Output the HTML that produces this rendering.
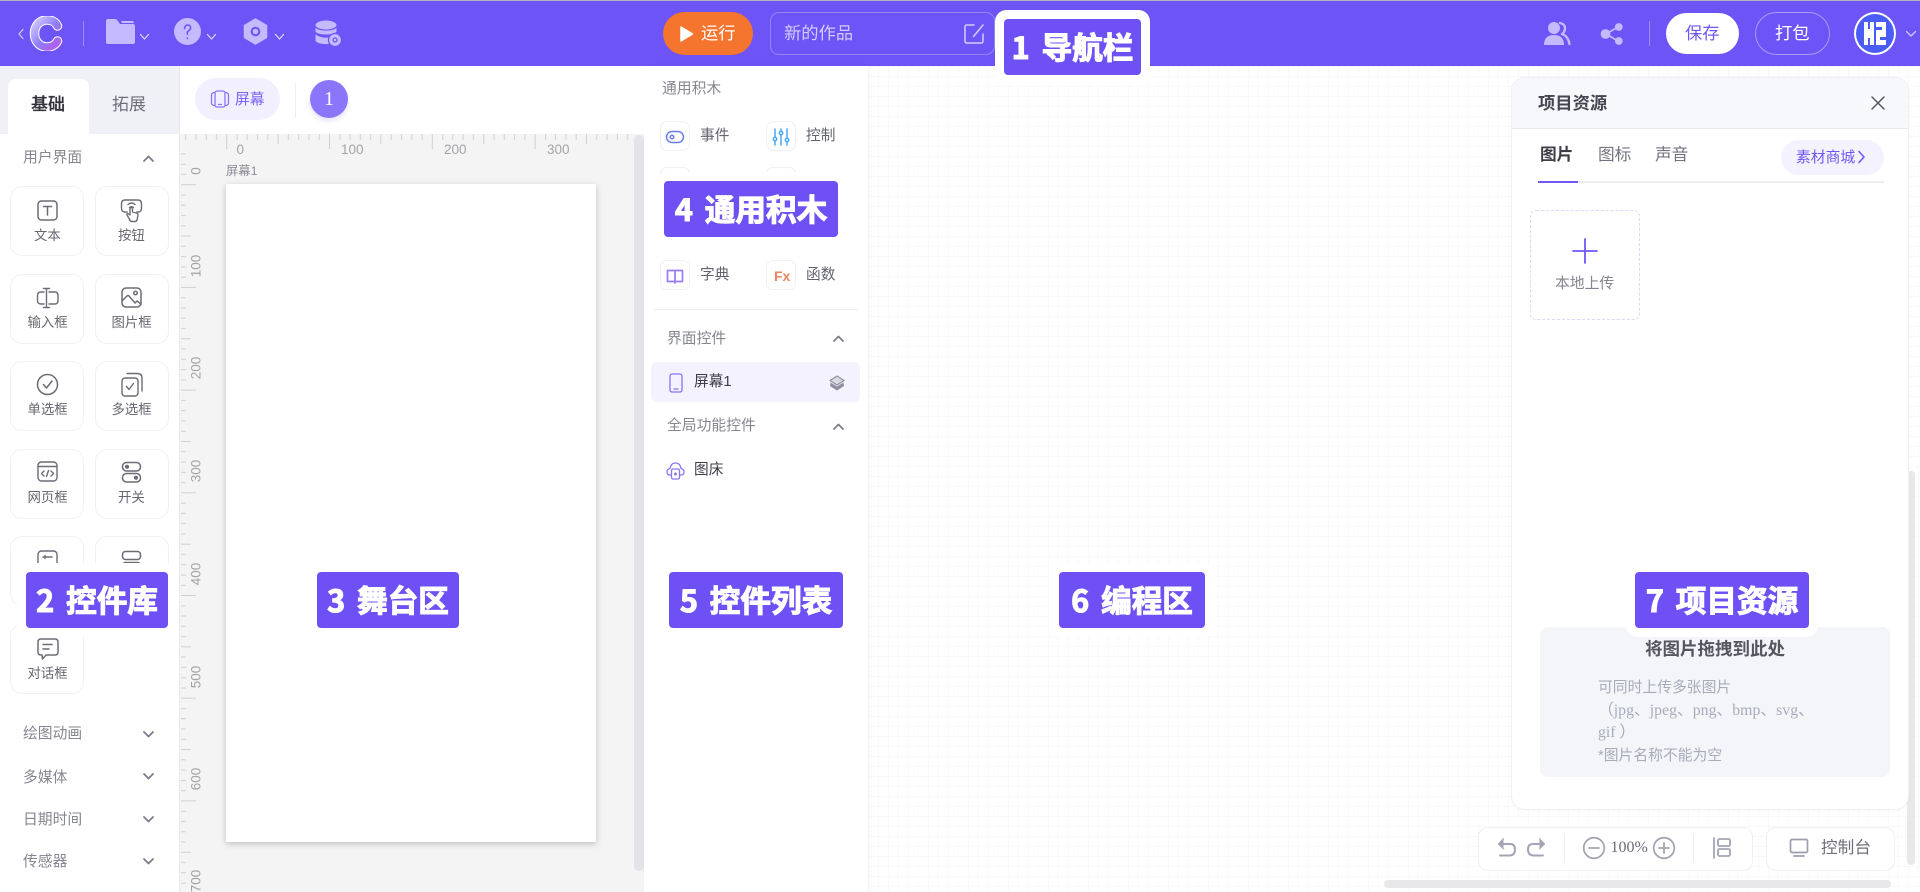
<!DOCTYPE html>
<html lang="zh-CN"><head><meta charset="utf-8"><title>新的作品</title>
<style>
*{box-sizing:border-box;margin:0;padding:0}
html,body{width:1920px;height:892px;overflow:hidden;background:#fff;font-family:"Liberation Sans","Noto Sans CJK SC",sans-serif}
#w{position:absolute;left:0;top:0;width:1920px;height:892px;overflow:hidden;background:#fff;filter:blur(.3px)}
.a,.t,.card,.lb,svg.i{position:absolute}
.t{white-space:nowrap;line-height:1}
.card{width:74px;height:70px;border:1px solid #f1f1f4;border-radius:12px;background:#fff}
.cl{color:#66676f;font-size:13.4px}
.g{color:#85868f;font-size:14.8px}
.lb{height:56px;background:#6f50f5;border-radius:4px;box-shadow:0 0 0 9px #fff;color:#fff;font-weight:700;font-size:30.600px;line-height:54px;text-align:center;white-space:nowrap;word-spacing:5px;z-index:10;-webkit-text-stroke:1.100px #fff;font-family:"Noto Sans CJK SC","Liberation Sans",sans-serif}
.bx{position:absolute;width:30px;height:30px;border:1px solid #f0f0f5;border-radius:7px;background:#fff}
svg.i{fill:none;stroke-linecap:round;stroke-linejoin:round}
.r{position:absolute;color:#a4a4a8;font-size:13.5px;line-height:1;white-space:nowrap}
.rv{position:absolute;color:#a4a4a8;font-size:13.5px;line-height:1;white-space:nowrap;transform:translate(-50%,-50%) rotate(-90deg)}
</style></head><body><div id="w">

<!-- top bar -->
<div class="a" style="left:0;top:0;width:1920px;height:66px;background:#6c54f6"></div>
<div class="a" style="left:0;top:0;width:1920px;height:1px;background:#b5b3bd"></div>
<svg class="i" style="left:16px;top:26px" width="10" height="16" viewBox="0 0 10 16" stroke="#cfc7ff" stroke-width="1.300"><path d="M7 3.500L3 8l4 4.500"/></svg>
<svg class="i" style="left:29px;top:16px" width="34" height="35" viewBox="0 0 34 35">
<defs><linearGradient id="lg" x1="0" y1="0" x2="1" y2="1"><stop offset="0" stop-color="#cfc8ff"/><stop offset=".55" stop-color="#8f7bf8"/><stop offset="1" stop-color="#b35cf0"/></linearGradient></defs>
<path d="M28.500 10C26 5 22 4 18 4 10 4 5.500 10.500 5.500 17.500S10 31 18 31c4.500 0 8.500-2 10.500-6" stroke="#fff" stroke-width="9.500"/>
<path d="M28.500 10C26 5 22 4 18 4 10 4 5.500 10.500 5.500 17.500S10 31 18 31c4.500 0 8.500-2 10.500-6" stroke="url(#lg)" stroke-width="7.500"/></svg>
<div class="a" style="left:83px;top:21px;width:1px;height:25px;background:#9c8bf9"></div>
<svg class="i" style="left:106px;top:18px" width="29" height="27" viewBox="0 0 29 27"><path d="M0 3Q0 1 2 1h7q1.500 0 2.500 1.500L14 6h13q2 0 2 2v16q0 2-2 2H2q-2 0-2-2z" fill="#c5b9ff"/><path d="M15 3h11q2 0 2 2H16z" fill="#c5b9ff"/></svg>
<svg class="i" style="left:139px;top:33px" width="11" height="8" viewBox="0 0 11 8" stroke="#d9d2ff" stroke-width="1.300"><path d="M1.500 1.500L5.500 6l4-4.500"/></svg>
<svg class="i" style="left:174px;top:18px" width="27" height="27" viewBox="0 0 27 27"><circle cx="13.500" cy="13.500" r="13.500" fill="#c5b9ff"/><path d="M10.500 10.500q.5-3.500 3.200-3.500t3 2.800q0 1.700-2 3t-1.300 3.500M13.400 20v.5" stroke="#6c54f6" stroke-width="1.500"/></svg>
<svg class="i" style="left:206px;top:33px" width="11" height="8" viewBox="0 0 11 8" stroke="#d9d2ff" stroke-width="1.300"><path d="M1.500 1.500L5.500 6l4-4.500"/></svg>
<svg class="i" style="left:243px;top:18px" width="25" height="27" viewBox="0 0 25 27"><path d="M12.500 1L23.500 7.500v12L12.500 26 1.500 19.500v-12z" fill="#c5b9ff" stroke="#c5b9ff" stroke-width="1.500"/><circle cx="12.500" cy="13.500" r="3.800" stroke="#6c54f6" stroke-width="2"/></svg>
<svg class="i" style="left:274px;top:33px" width="11" height="8" viewBox="0 0 11 8" stroke="#d9d2ff" stroke-width="1.300"><path d="M1.500 1.500L5.500 6l4-4.500"/></svg>
<svg class="i" style="left:315px;top:20px" width="27" height="27" viewBox="0 0 27 27"><ellipse cx="11" cy="5" rx="10.500" ry="4.500" fill="#c5b9ff"/><path d="M.5 7.500c2 4 19 4 21 0v4c-2 4-19 4-21 0z" fill="#c5b9ff"/><path d="M.5 14c2 3.500 13 4.500 15 3l-2 7c-5 .5-11-.5-13-3z" fill="#c5b9ff"/><circle cx="20" cy="20" r="6.500" fill="#c5b9ff" stroke="#6c54f6" stroke-width="1.200"/><circle cx="20" cy="20" r="2" stroke="#6c54f6" stroke-width="1.200"/></svg>

<div class="a" style="left:663px;top:12px;width:90px;height:43px;border-radius:22px;background:#f5742e"></div>
<svg class="i" style="left:680px;top:25px" width="14" height="18" viewBox="0 0 14 18"><path d="M1 2l11.500 7L1 16z" fill="#fff" stroke="#fff" stroke-width="1.500"/></svg>
<div class="t" style="left:701px;top:25px;font-size:17.300px;color:#fff">运行</div>
<div class="a" style="left:770px;top:12px;width:225px;height:43px;border:1px solid #9385f8;border-radius:9px"></div>
<div class="t" style="left:784px;top:25px;font-size:17.300px;color:#d3cbff">新的作品</div>
<svg class="i" style="left:963px;top:23px" width="23" height="22" viewBox="0 0 23 22" stroke="#d5cdff" stroke-width="1.500"><path d="M11 2H4Q2 2 2 4v14q0 2 2 2h14q2 0 2-2v-7M20 2L10.500 13.500"/></svg>

<svg class="i" style="left:1544px;top:21px" width="27" height="25" viewBox="0 0 27 25"><circle cx="10" cy="7" r="6" fill="#c5b9ff"/><path d="M0 24q0-10 10-10t10 10z" fill="#c5b9ff"/><path d="M16 2q5 1 5 5t-3 6q6 2 7.500 10" stroke="#c5b9ff" stroke-width="2.400"/></svg>
<svg class="i" style="left:1600px;top:22px" width="24" height="24" viewBox="0 0 24 24" stroke="#c5b9ff" stroke-width="1.800"><path d="M18 5L6 12l12 7"/><circle cx="18.800" cy="5" r="3" fill="#c5b9ff"/><circle cx="5.500" cy="12" r="4" fill="#c5b9ff"/><circle cx="18.800" cy="19" r="3" fill="#c5b9ff"/></svg>
<div class="a" style="left:1649px;top:21px;width:1px;height:25px;background:#9c8bf9"></div>
<div class="a" style="left:1666px;top:13px;width:73px;height:41px;border-radius:21px;background:#fff"></div>
<div class="t" style="left:1685px;top:25px;font-size:17.300px;color:#7158f5">保存</div>
<div class="a" style="left:1755px;top:12px;width:75px;height:43px;border-radius:22px;border:1px solid #a99cfa"></div>
<div class="t" style="left:1775px;top:25px;font-size:17.300px;color:#fff">打包</div>
<div class="a" style="left:1854px;top:12px;width:42px;height:43px;border-radius:50%;background:#4a5dfb;border:2px solid #fff"></div>
<svg class="i" style="left:1864px;top:22px" width="22" height="23" viewBox="0 0 22 23"><path d="M0 0h4v7h2V0h4v23H6v-7H4v7H0z" fill="#fff"/><path d="M12 0h10v23H12z" fill="#fff"/><path d="M12 5h6v3h-6zM16 15h6v3h-6z" fill="#4a5dfb"/></svg>
<svg class="i" style="left:1905px;top:30px" width="12" height="8" viewBox="0 0 12 8" stroke="#cfc7ff" stroke-width="1.300"><path d="M1.500 1.500L6 6l4.500-4.500"/></svg>

<!-- left panel -->
<div class="a" style="left:0;top:66px;width:180px;height:826px;background:#fff;border-right:1px solid #e8e8ec"></div>
<div class="a" style="left:0;top:66px;width:179px;height:68px;background:#f0f1f7"></div>
<div class="a" style="left:8px;top:79px;width:81px;height:56px;background:#fff;border-radius:8px 8px 0 0"></div>
<div class="t" style="left:31px;top:96px;font-size:17px;font-weight:500;color:#33333d;-webkit-text-stroke:.25px #33333d">基础</div>
<div class="t" style="left:112px;top:96px;font-size:17px;color:#6e6f7b">拓展</div>
<div class="t g" style="left:23px;top:151px">用户界面</div>
<svg class="i" style="left:142px;top:154px" width="13" height="9" viewBox="0 0 13 9" stroke="#7c7d8a" stroke-width="1.800"><path d="M2 7l4.500-4.500L11 7"/></svg>

<div class="card" style="left:10px;top:186px"></div><div class="card" style="left:94.500px;top:186px"></div>
<div class="card" style="left:10px;top:274px"></div><div class="card" style="left:94.500px;top:274px"></div>
<div class="card" style="left:10px;top:361px"></div><div class="card" style="left:94.500px;top:361px"></div>
<div class="card" style="left:10px;top:449px"></div><div class="card" style="left:94.500px;top:449px"></div>
<div class="card" style="left:10px;top:536px"></div><div class="card" style="left:94.500px;top:536px"></div>
<div class="card" style="left:10px;top:624px"></div>

<svg class="i" style="left:36px;top:199px" width="23" height="23" viewBox="0 0 23 23" stroke="#6b6c78" stroke-width="1.500"><rect x="2" y="2" width="19" height="19" rx="3.500"/><path d="M7.500 7.500h8M11.500 7.500v8.500"/></svg>
<svg class="i" style="left:120px;top:198px" width="23" height="25" viewBox="0 0 23 25" stroke="#6b6c78" stroke-width="1.400"><path d="M7 14H5Q1.500 14 1.500 10V6Q1.500 2 5 2h13q3.500 0 3.500 4v4q0 4-3.500 4h-1"/><path d="M8 6.500q3.500-3 7 0M9.500 9.500q2-1.500 4 0"/><path d="M10 22l-3-5q-.5-1.500 1-1.500l2 1.500V11q0-1.500 1.300-1.500T12.500 11v3l4 1q1.500.5 1.500 2l-1 5q-.5 1.500-2 1.500h-3q-1.500 0-2.500-1.500z" fill="#fff"/></svg>
<div class="t cl" style="left:34px;top:229px">文本</div>
<div class="t cl" style="left:118px;top:229px">按钮</div>

<svg class="i" style="left:36px;top:286px" width="24" height="24" viewBox="0 0 24 24" stroke="#6b6c78" stroke-width="1.400"><path d="M8 6H5Q1.500 6 1.500 9.500v5Q1.500 18 5 18h3M13 6h6q3 0 3 3.500v5q0 3.500-3 3.500h-6"/><path d="M10.500 2.500v19M7.500 2.500h6M7.500 21.500h6"/></svg>
<svg class="i" style="left:120px;top:286px" width="23" height="23" viewBox="0 0 23 23" stroke="#6b6c78" stroke-width="1.500"><rect x="2" y="2" width="19" height="19" rx="4"/><path d="M2 15l5-5q1-1 2 0l6 7 2-2 4 3"/><circle cx="15.500" cy="7" r="1.800"/></svg>
<div class="t cl" style="left:27.500px;top:316px">输入框</div>
<div class="t cl" style="left:111.500px;top:316px">图片框</div>

<svg class="i" style="left:36px;top:373px" width="23" height="23" viewBox="0 0 23 23" stroke="#6b6c78" stroke-width="1.500"><circle cx="11.500" cy="11.500" r="10"/><path d="M7.500 11.500l3 3.500 5.500-7"/></svg>
<svg class="i" style="left:120px;top:372px" width="24" height="25" viewBox="0 0 24 25" stroke="#6b6c78" stroke-width="1.400"><rect x="2" y="6" width="16" height="18" rx="3"/><path d="M7 1.500h10Q22 1.500 22 6v13M6.500 14.500l2.500 3 4.500-6"/></svg>
<div class="t cl" style="left:27.500px;top:403px">单选框</div>
<div class="t cl" style="left:111.500px;top:403px">多选框</div>

<svg class="i" style="left:36px;top:460px" width="23" height="23" viewBox="0 0 23 23" stroke="#6b6c78" stroke-width="1.400"><rect x="2" y="2" width="19" height="19" rx="3.500"/><path d="M2 6.500h19M8 11l-2.500 2.500L8 16M15 11l2.500 2.500L15 16M12.500 10.500l-2 6"/></svg>
<svg class="i" style="left:120px;top:461px" width="23" height="23" viewBox="0 0 23 23" stroke="#6b6c78" stroke-width="1.500"><rect x="2.500" y="1.500" width="18" height="8.500" rx="4"/><rect x="2.500" y="12.500" width="18" height="8.500" rx="4"/><circle cx="7" cy="5.800" r="1.300" fill="#6b6c78"/><circle cx="16" cy="16.800" r="1.300" fill="#6b6c78"/></svg>
<div class="t cl" style="left:27.500px;top:491px">网页框</div>
<div class="t cl" style="left:118px;top:491px">开关</div>

<svg class="i" style="left:36px;top:549px" width="23" height="23" viewBox="0 0 23 23" stroke="#6b6c78" stroke-width="1.400"><rect x="2" y="2" width="19" height="19" rx="3.500"/><path d="M7 8h9M9 6.500v3"/></svg>
<svg class="i" style="left:120px;top:550px" width="23" height="23" viewBox="0 0 23 23" stroke="#6b6c78" stroke-width="1.500"><rect x="2.500" y="1.500" width="18" height="8" rx="3"/><rect x="2.500" y="12.500" width="18" height="8" rx="3"/></svg>

<svg class="i" style="left:36px;top:637px" width="23" height="24" viewBox="0 0 23 24" stroke="#6b6c78" stroke-width="1.500"><path d="M5 2h14q3 0 3 3v10q0 3-3 3h-9l-3.500 4-.5-4H5q-3 0-3-3V5q0-3 3-3z"/><path d="M7 7.500h9M7 12h6"/></svg>
<div class="t cl" style="left:27.500px;top:667px">对话框</div>

<div class="t g" style="left:23px;top:727px">绘图动画</div>
<div class="t g" style="left:23px;top:771px">多媒体</div>
<div class="t g" style="left:23px;top:813px">日期时间</div>
<div class="t g" style="left:23px;top:855px">传感器</div>
<svg class="i" style="left:142px;top:730px" width="13" height="9" viewBox="0 0 13 9" stroke="#7c7d8a" stroke-width="1.800"><path d="M2 2l4.500 4.500L11 2"/></svg>
<svg class="i" style="left:142px;top:772px" width="13" height="9" viewBox="0 0 13 9" stroke="#7c7d8a" stroke-width="1.800"><path d="M2 2l4.500 4.500L11 2"/></svg>
<svg class="i" style="left:142px;top:815px" width="13" height="9" viewBox="0 0 13 9" stroke="#7c7d8a" stroke-width="1.800"><path d="M2 2l4.500 4.500L11 2"/></svg>
<svg class="i" style="left:142px;top:857px" width="13" height="9" viewBox="0 0 13 9" stroke="#7c7d8a" stroke-width="1.800"><path d="M2 2l4.500 4.500L11 2"/></svg>

<!-- stage -->
<div class="a" style="left:180px;top:66px;width:464px;height:68px;background:#fff"></div>
<div class="a" style="left:195px;top:78px;width:85px;height:42px;border-radius:21px;background:#f2efff"></div>
<svg class="i" style="left:210px;top:90px" width="20" height="18" viewBox="0 0 20 18" stroke="#8a74f7" stroke-width="1.300"><rect x="5" y="1" width="10" height="16" rx="2"/><path d="M4 2.500Q1.500 3 1.500 5v8q0 2 2.500 2.500M16 2.500q2.500.5 2.500 2.500v8q0 2-2.500 2.500M8.500 14.500h3"/></svg>
<div class="t" style="left:235px;top:93px;font-size:14.700px;color:#7b63f6">屏幕</div>
<div class="a" style="left:294.500px;top:83px;width:1px;height:35px;background:#eeeef2"></div>
<div class="a" style="left:310px;top:80px;width:38px;height:38px;border-radius:50%;background:#8b75fb;box-shadow:0 3px 5px rgba(130,110,240,.2);color:#fff;font:20px/38px 'Liberation Serif',serif;text-align:center">1</div>

<div class="a" style="left:180px;top:134px;width:464px;height:758px;background:#f4f4f5"></div>
<svg class="a" style="left:180px;top:134px" width="454" height="758" viewBox="0 0 454 758">
<defs>
<pattern id="ph" patternUnits="userSpaceOnUse" x="46.200" y="0" width="102.800" height="20">
<path d="M.5 0v15M11 0v6M21 0v6M31.300 0v6M41.600 0v6M51.900 0v10M62.200 0v6M72.500 0v6M82.800 0v6M93.100 0v6" stroke="#d0d0d3" stroke-width="1" fill="none"/>
</pattern>
<pattern id="pv" patternUnits="userSpaceOnUse" x="1" y="50.200" width="20" height="102.700">
<path d="M0 .5h15M0 10.800h5M0 21h5M0 31.300h5M0 41.600h5M0 51.800h10M0 62.100h5M0 72.400h5M0 82.700h5M0 93h5" stroke="#d0d0d3" stroke-width="1" fill="none"/>
</pattern>
</defs>
<rect x="1" y="0" width="453" height="16" fill="url(#ph)"/>
<rect x="1" y="16" width="16" height="742" fill="url(#pv)"/>
</svg>
<div class="r" style="left:236.500px;top:143px">0</div>
<div class="r" style="left:341px;top:143px">100</div>
<div class="r" style="left:444px;top:143px">200</div>
<div class="r" style="left:547px;top:143px">300</div>
<div class="rv" style="left:196px;top:171px">0</div>
<div class="rv" style="left:196px;top:265.500px">100</div>
<div class="rv" style="left:196px;top:368px">200</div>
<div class="rv" style="left:196px;top:471px">300</div>
<div class="rv" style="left:196px;top:574px">400</div>
<div class="rv" style="left:196px;top:676.500px">500</div>
<div class="rv" style="left:196px;top:779px">600</div>
<div class="rv" style="left:196px;top:881px">700</div>
<div class="t" style="left:226px;top:165px;font-size:12.300px;color:#8b8c96">屏幕1</div>
<div class="a" style="left:226px;top:184px;width:370px;height:658px;background:#fff;box-shadow:0 2px 6px rgba(0,0,0,.22)"></div>
<div class="a" style="left:633.500px;top:135px;width:10.500px;height:736px;border-radius:5px;background:#e3e4e9"></div>

<!-- canvas -->
<div class="a" style="left:868px;top:66px;width:1052px;height:826px;background-color:#fff;background-image:linear-gradient(#f9f9f9 1px,transparent 1px),linear-gradient(90deg,#f9f9f9 1px,transparent 1px);background-size:10px 10px;background-position:0 0"></div>

<!-- blocks panel -->
<div class="a" style="left:644px;top:66px;width:224px;height:826px;background:#fff;box-shadow:2px 0 6px rgba(0,0,0,.035)"></div>
<div class="t g" style="left:662px;top:82px">通用积木</div>
<div class="bx" style="left:660px;top:121px"></div><div class="bx" style="left:766px;top:121px"></div>
<div class="bx" style="left:660px;top:167px"></div><div class="bx" style="left:766px;top:167px"></div>
<div class="bx" style="left:660px;top:260px"></div><div class="bx" style="left:766px;top:260px"></div>
<svg class="i" style="left:665px;top:127px" width="20" height="20" viewBox="0 0 20 20" stroke="#6a7cf0" stroke-width="1.500"><rect x="1.500" y="4.500" width="17" height="11" rx="5.500"/><circle cx="7" cy="10" r="1.800"/></svg>
<svg class="i" style="left:772px;top:127px" width="18" height="20" viewBox="0 0 18 20" stroke="#4aa8f5" stroke-width="1.500"><path d="M3 2v16M9 2v16M15 2v16"/><circle cx="3" cy="12" r="1.700" fill="#fff"/><circle cx="9" cy="6" r="1.700" fill="#fff"/><circle cx="15" cy="13" r="1.700" fill="#fff"/></svg>
<svg class="i" style="left:665px;top:266px" width="20" height="20" viewBox="0 0 20 20" stroke="#9a7bff" stroke-width="1.700"><path d="M10 4.500V17M10 4.500H2.500V15.500H10M10 4.500h7.500V15.500H10"/></svg>
<div class="t" style="left:774px;top:269px;font-size:14px;font-weight:700;color:#ea8561">Fx</div>
<div class="t" style="left:700px;top:129px;font-size:14.700px;color:#62636e">事件</div>
<div class="t" style="left:806px;top:129px;font-size:14.700px;color:#62636e">控制</div>
<div class="t" style="left:700px;top:268px;font-size:14.700px;color:#62636e">字典</div>
<div class="t" style="left:806px;top:268px;font-size:14.700px;color:#62636e">函数</div>
<div class="a" style="left:654px;top:309px;width:204px;height:1px;background:#eeeef2"></div>
<div class="t g" style="left:667px;top:332px">界面控件</div>
<svg class="i" style="left:832px;top:334px" width="13" height="9" viewBox="0 0 13 9" stroke="#7c7d8a" stroke-width="1.800"><path d="M2 7l4.500-4.500L11 7"/></svg>
<div class="a" style="left:651px;top:362px;width:209px;height:40px;border-radius:6px;background:#f3f2fe"></div>
<svg class="i" style="left:669px;top:373px" width="14" height="20" viewBox="0 0 14 20" stroke="#8a74f7" stroke-width="1.300"><rect x="1" y="1" width="12" height="18" rx="2"/><path d="M5 16h4"/></svg>
<div class="t" style="left:694px;top:375px;font-size:14.700px;color:#3d3d48">屏幕1</div>
<svg class="i" style="left:829px;top:375px" width="16" height="16" viewBox="0 0 16 16"><path d="M1.500 7.500L8 11.500l6.500-4 .5 3.500L8 15.500 1 11z" fill="#8e8fa0"/><path d="M8 1l7 4.500-7 4.500-7-4.500z" fill="#d8d9e2" stroke="#8e8fa0" stroke-width="1.100"/></svg>
<div class="t g" style="left:667px;top:419px">全局功能控件</div>
<svg class="i" style="left:832px;top:422px" width="13" height="9" viewBox="0 0 13 9" stroke="#7c7d8a" stroke-width="1.800"><path d="M2 7l4.500-4.500L11 7"/></svg>
<svg class="i" style="left:666px;top:462px" width="19" height="18" viewBox="0 0 19 18" stroke="#8a74f7" stroke-width="1.300"><path d="M5 13H4Q1 13 1 10t3-3.500Q5 1 9.500 1T15 6.500q3 .5 3 3.500t-3 3h-1"/><rect x="5.500" y="7" width="8" height="10" rx="1.500"/><circle cx="9.500" cy="12" r=".8"/></svg>
<div class="t" style="left:694px;top:463px;font-size:14.700px;color:#3d3d48">图床</div>

<!-- scrollbars (behind panel) -->
<div class="a" style="left:1907px;top:471px;width:8px;height:394px;border-radius:4px;background:#e8e8ea"></div>
<div class="a" style="left:1384px;top:880px;width:507px;height:8px;border-radius:4px;background:#e8e8ea"></div>

<!-- resource panel -->
<div class="a" style="left:1511px;top:77px;width:398px;height:733px;background:#fff;border:1px solid #f0f0f4;border-radius:14px;box-shadow:0 1px 4px rgba(0,0,0,.03)"></div>
<div class="a" style="left:1512px;top:78px;width:396px;height:51px;background:#f7f8fc;border-bottom:1px solid #e9e9ee;border-radius:13px 13px 0 0"></div>
<div class="t" style="left:1538px;top:95px;font-size:17.300px;font-weight:700;color:#45454f">项目资源</div>
<svg class="i" style="left:1870px;top:95px" width="16" height="16" viewBox="0 0 16 16" stroke="#55565f" stroke-width="1.500"><path d="M2 2l12 12M14 2L2 14"/></svg>
<div class="t" style="left:1540px;top:147px;font-size:16.700px;font-weight:700;color:#3d3d48">图片</div>
<div class="t" style="left:1598px;top:147px;font-size:16.700px;color:#72737f">图标</div>
<div class="t" style="left:1655px;top:147px;font-size:16.700px;color:#72737f">声音</div>
<div class="a" style="left:1538px;top:181px;width:346px;height:1.500px;background:#ececf0"></div>
<div class="a" style="left:1538px;top:180.500px;width:40px;height:2px;background:#7158f5"></div>
<div class="a" style="left:1781px;top:140px;width:103px;height:35px;border-radius:18px;background:#f3f2fe"></div>
<div class="t" style="left:1796px;top:151px;font-size:14.800px;color:#7158f5">素材商城</div>
<svg class="i" style="left:1857px;top:150px" width="9" height="14" viewBox="0 0 9 14" stroke="#7158f5" stroke-width="1.600"><path d="M2 1.500L7 7l-5 5.500"/></svg>
<div class="a" style="left:1530px;top:210px;width:110px;height:110px;border:1px dashed #dcd8f6;border-radius:6px"></div>
<svg class="i" style="left:1572px;top:238px" width="26" height="26" viewBox="0 0 26 26" stroke="#7158f5" stroke-width="1.800"><path d="M13 1v24M1 13h24"/></svg>
<div class="t" style="left:1555px;top:277px;font-size:14.800px;color:#85868f">本地上传</div>

<div class="a" style="left:1540px;top:627px;width:350px;height:150px;border-radius:8px;background:#f3f5f9"></div>
<div class="t" style="left:1645px;top:641px;font-size:17.500px;font-weight:700;color:#55565f">将图片拖拽到此处</div>
<div class="t" style="left:1598px;top:681px;font-size:14.800px;color:#a9abb9">可同时上传多张图片</div>
<div class="t" style="left:1598px;top:703px;font-size:15.800px;color:#a9abb9;font-family:'Liberation Serif','Noto Sans CJK SC',serif">（jpg、jpeg、png、bmp、svg、</div>
<div class="t" style="left:1598px;top:725px;font-size:15.800px;color:#a9abb9;font-family:'Liberation Serif','Noto Sans CJK SC',serif">gif ）</div>
<div class="t" style="left:1598px;top:749px;font-size:14.800px;color:#a9abb9">*图片名称不能为空</div>

<!-- bottom toolbar -->
<div class="a" style="left:1478px;top:827px;width:275px;height:44px;border:1px solid #f0f0f4;border-radius:10px;background:#fff"></div>
<div class="a" style="left:1766px;top:827px;width:129px;height:44px;border:1px solid #f0f0f4;border-radius:10px;background:#fff"></div>
<svg class="i" style="left:1496px;top:836px" width="22" height="22" viewBox="0 0 22 22" stroke="#a3a5b4" stroke-width="2"><path d="M3 8h11q5 0 5 5.500T14 19.500H4"/><path d="M7.500 2.500L2.500 8l5 5" fill="#a3a5b4" stroke-width="1"/></svg>
<svg class="i" style="left:1525px;top:836px" width="22" height="22" viewBox="0 0 22 22" stroke="#a3a5b4" stroke-width="2"><path d="M19 8H8Q3 8 3 13.500t5 6h10"/><path d="M14.500 2.500l5 5.500-5 5" fill="#a3a5b4" stroke-width="1"/></svg>
<div class="a" style="left:1564px;top:834px;width:1px;height:28px;background:#eeeef2"></div>
<svg class="i" style="left:1582px;top:836px" width="24" height="24" viewBox="0 0 24 24" stroke="#a3a5b4" stroke-width="1.800"><circle cx="12" cy="12" r="10.300"/><path d="M7 12h10"/></svg>
<div class="t" style="left:1610.500px;top:840px;font-size:16px;color:#6b6c78;font-family:'Liberation Serif',serif">100%</div>
<svg class="i" style="left:1652px;top:836px" width="24" height="24" viewBox="0 0 24 24" stroke="#a3a5b4" stroke-width="1.800"><circle cx="12" cy="12" r="10.300"/><path d="M7 12h10M12 7v10"/></svg>
<div class="a" style="left:1693px;top:834px;width:1px;height:28px;background:#eeeef2"></div>
<svg class="i" style="left:1712px;top:837px" width="20" height="22" viewBox="0 0 20 22" stroke="#a3a5b4" stroke-width="1.800"><path d="M2 1v20"/><rect x="6" y="2" width="12" height="7" rx="1.500"/><rect x="6" y="12" width="12" height="7" rx="1.500"/></svg>
<svg class="i" style="left:1789px;top:838px" width="20" height="20" viewBox="0 0 20 20" stroke="#9c9ead" stroke-width="1.700"><rect x="1.500" y="1.500" width="17" height="13" rx="1.500"/><path d="M5 18h10"/></svg>
<div class="t" style="left:1821px;top:840px;font-size:16.700px;color:#6e6f7b">控制台</div>

<!-- labels -->
<div class="lb" style="left:1004px;top:19px;width:137px">1 导航栏</div>
<div class="lb" style="left:26px;top:572px;width:142px">2 控件库</div>
<div class="lb" style="left:317px;top:572px;width:142px">3 舞台区</div>
<div class="lb" style="left:664px;top:181px;width:174px">4 通用积木</div>
<div class="lb" style="left:669px;top:572px;width:174px">5 控件列表</div>
<div class="lb" style="left:1059px;top:572px;width:146px">6 编程区</div>
<div class="lb" style="left:1635px;top:572px;width:174px">7 项目资源</div>
</div></body></html>
